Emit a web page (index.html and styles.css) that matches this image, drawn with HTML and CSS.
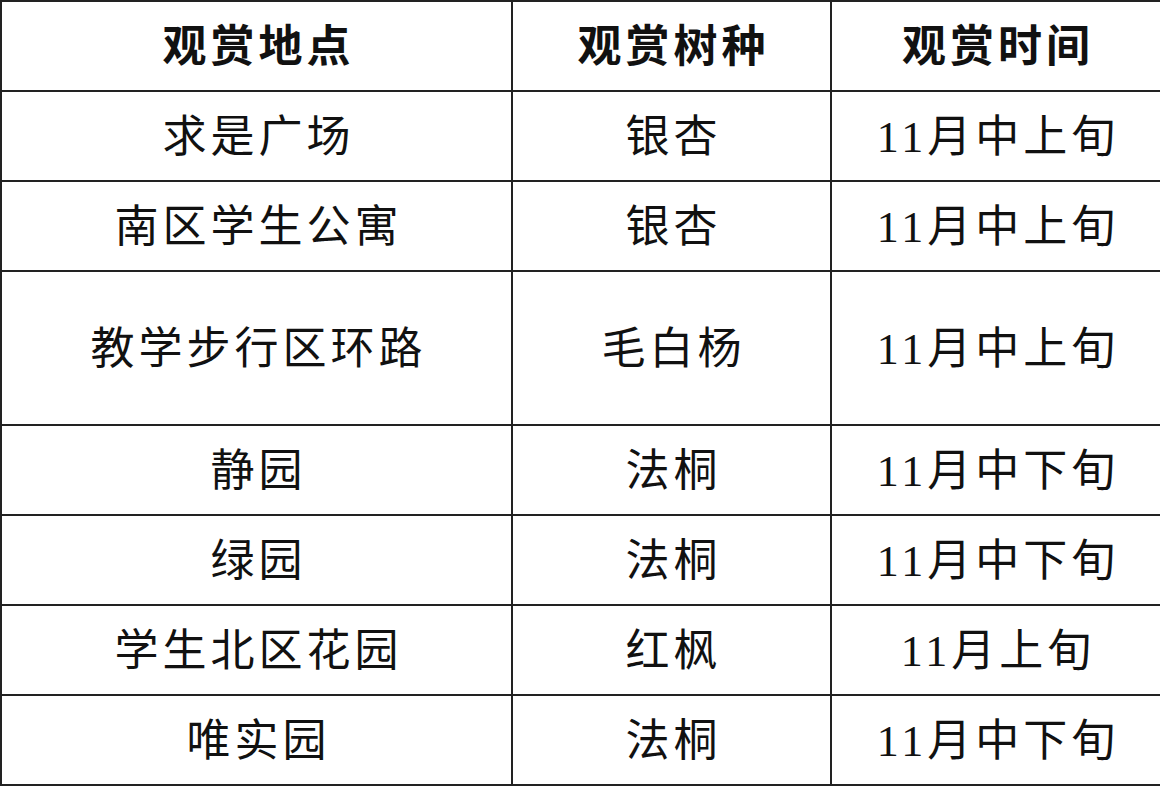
FILE: index.html
```html
<!DOCTYPE html>
<html lang="zh">
<head>
<meta charset="utf-8">
<link rel="stylesheet" href="styles.css">
</head>
<body>
<table class="tbl">
  <colgroup>
    <col class="c1"><col class="c2"><col class="c3">
  </colgroup>
  <thead>
    <tr class="row"><th>观赏地点</th><th>观赏树种</th><th>观赏时间</th></tr>
  </thead>
  <tbody>
    <tr class="row"><td>求是广场</td><td>银杏</td><td>11月中上旬</td></tr>
    <tr class="row"><td>南区学生公寓</td><td>银杏</td><td>11月中上旬</td></tr>
    <tr class="row tall"><td>教学步行区环路</td><td>毛白杨</td><td>11月中上旬</td></tr>
    <tr class="row"><td>静园</td><td>法桐</td><td>11月中下旬</td></tr>
    <tr class="row"><td>绿园</td><td>法桐</td><td>11月中下旬</td></tr>
    <tr class="row"><td>学生北区花园</td><td>红枫</td><td>11月上旬</td></tr>
    <tr class="row"><td>唯实园</td><td>法桐</td><td>11月中下旬</td></tr>
  </tbody>
</table>
</body>
</html>
```
FILE: styles.css
```css
html, body {
  margin: 0;
  padding: 0;
  background: #fff;
}
.tbl {
  width: 1160px;
  table-layout: fixed;
  border-collapse: collapse;
  font-family: "Liberation Serif", "Noto Sans CJK SC", serif;
  font-size: 44px;
  color: #111;
}
.c1 { width: 511px; }
.c2 { width: 319px; }
.c3 { width: 330px; }
.tbl th, .tbl td {
  border: 2px solid #222;
  text-align: center;
  vertical-align: middle;
  padding: 4px 0 0 4px;
  letter-spacing: 4px;
  font-weight: 400;
  line-height: 1;
}
.tbl th {
  font-weight: 600;
}
.row { height: 90px; }
.row.tall { height: 154px; }
```
